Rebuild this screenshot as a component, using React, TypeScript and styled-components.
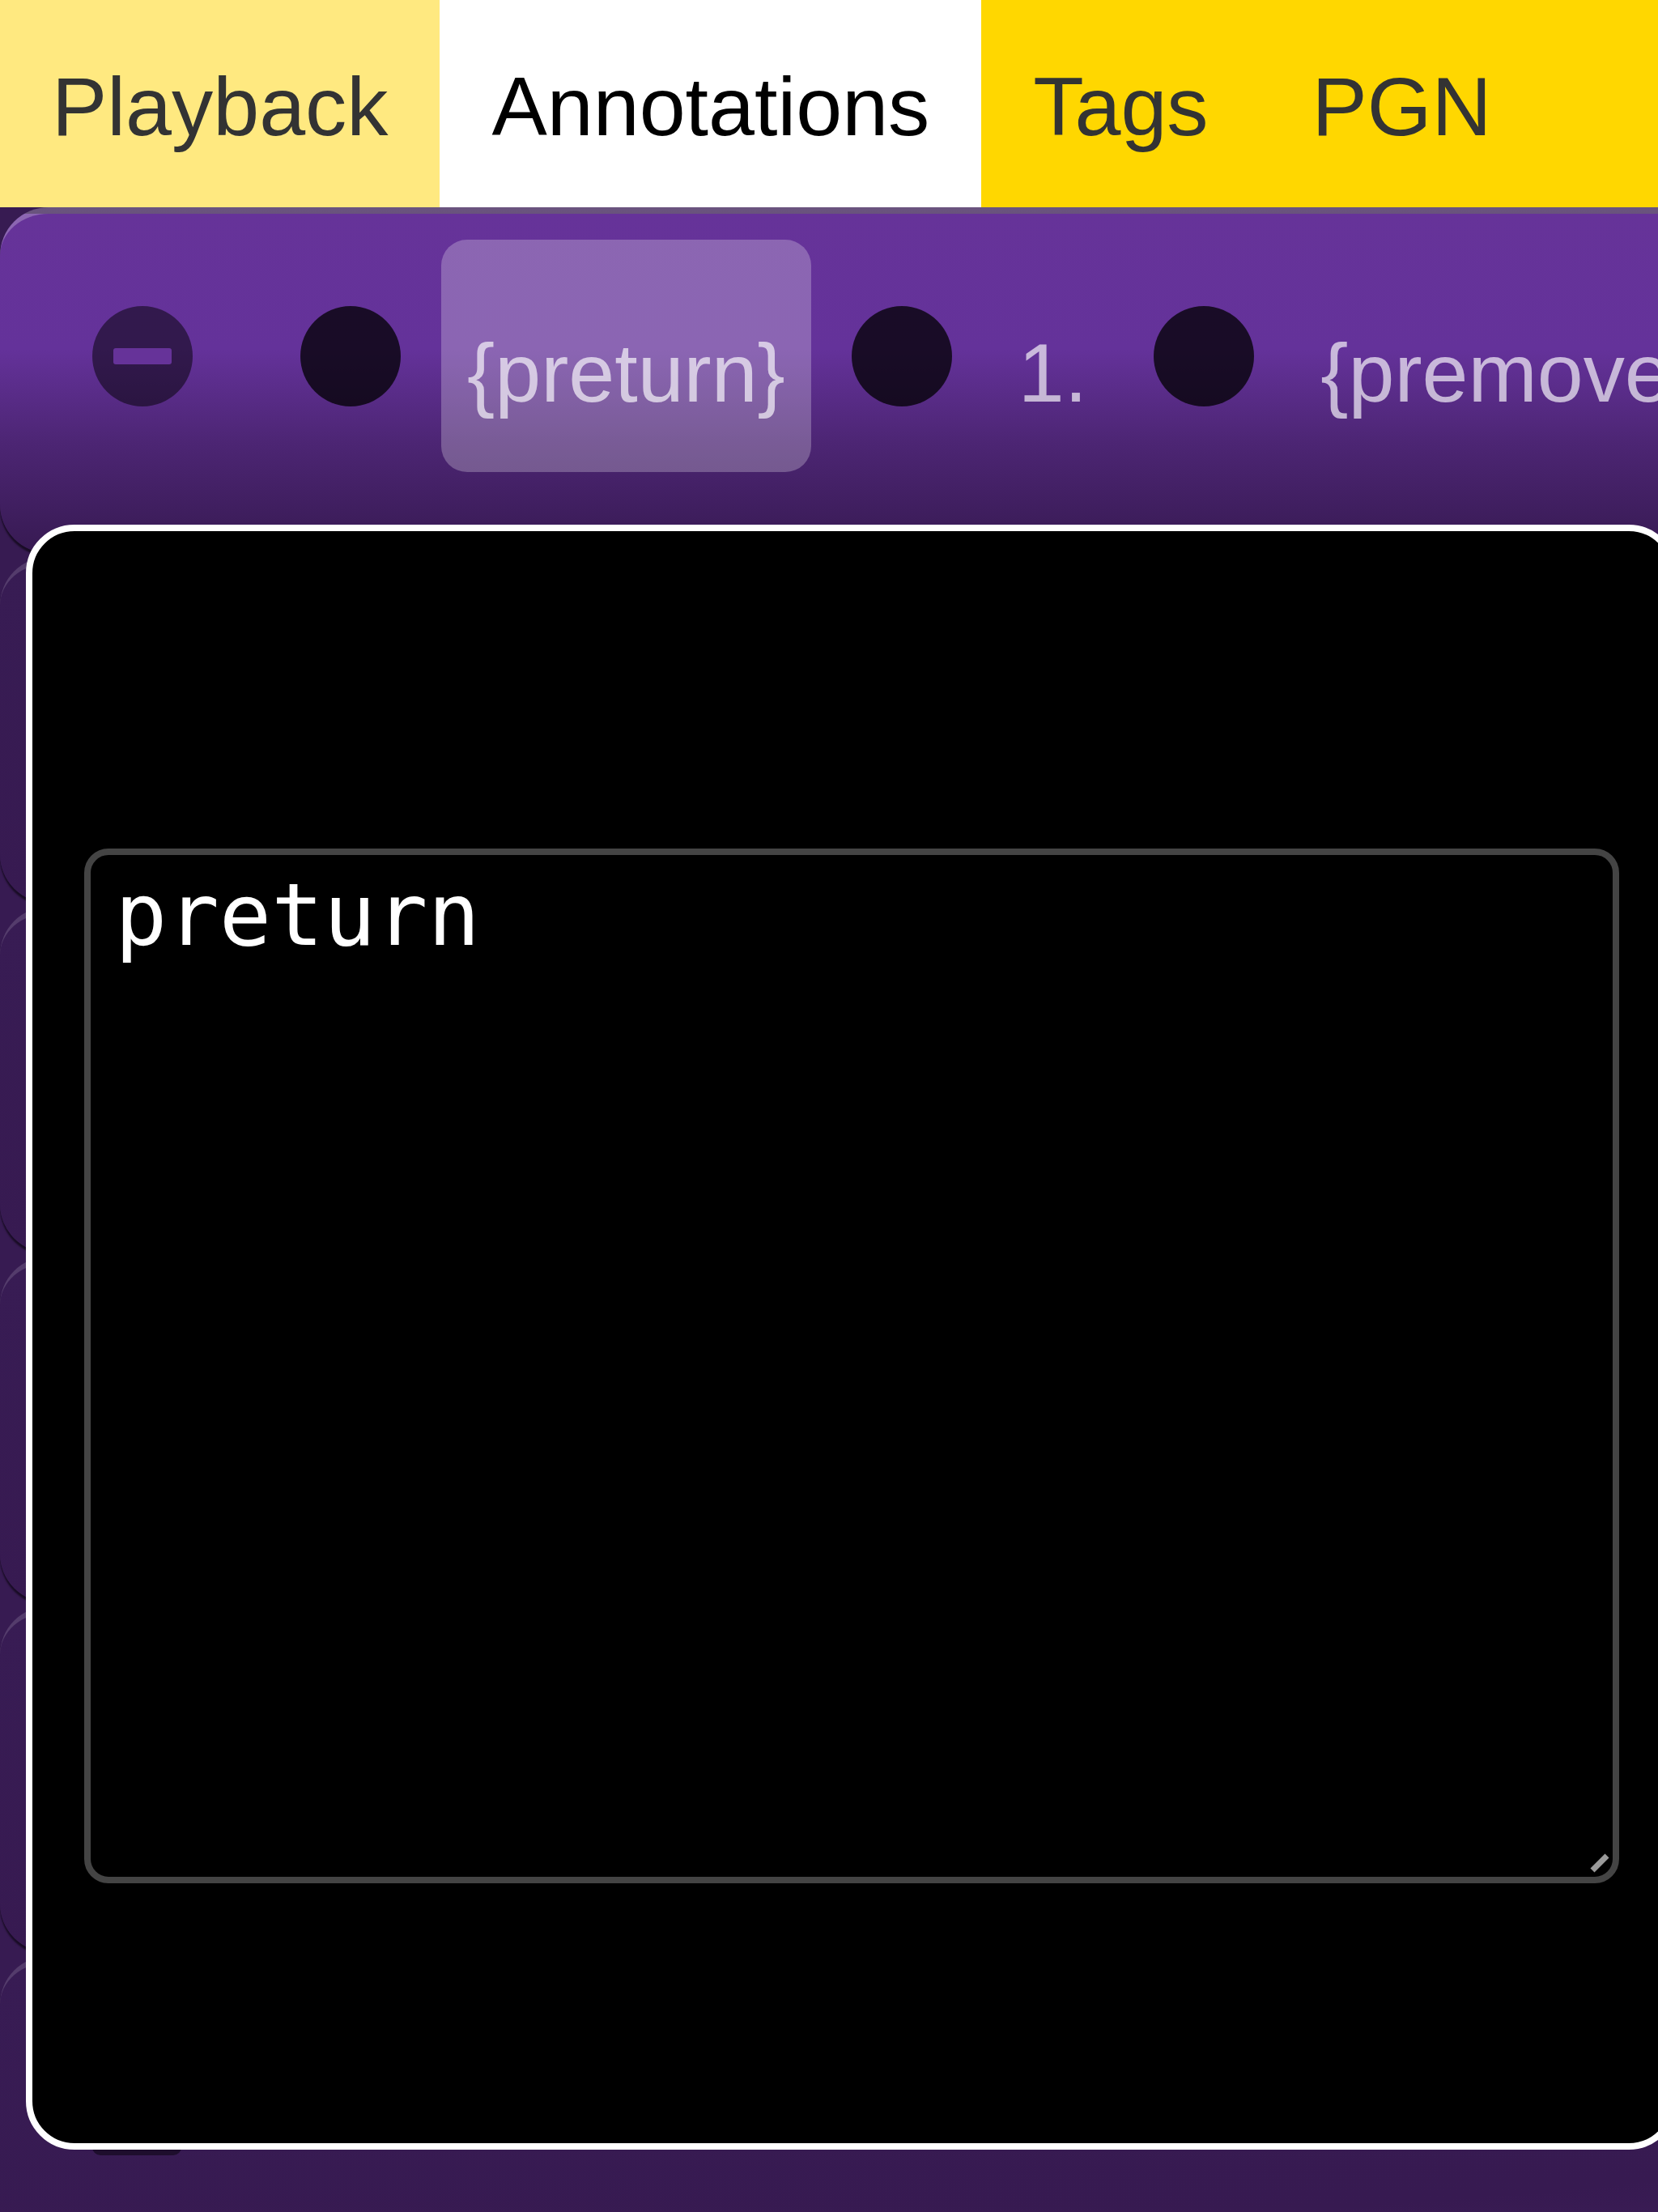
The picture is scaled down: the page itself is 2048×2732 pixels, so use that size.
import React from "react";
import styled, { createGlobalStyle } from "styled-components";

const GlobalStyle = createGlobalStyle`
  html, body {
    margin: 0;
    padding: 0;
    background: #371b52;
    overflow: hidden;
  }
  body {
    font-family: "Liberation Sans", Arial, sans-serif;
  }
  * { box-sizing: border-box; }
`;

const Page = styled.div`
  position: relative;
  width: 2048px;
  height: 2732px;
  overflow: hidden;
`;

const TabBar = styled.nav`
  display: flex;
  height: 256px;
  background: #ffd700;
`;

const Tab = styled.button<{ $state: "hover" | "active" | "idle" }>`
  display: flex;
  align-items: center;
  height: 100%;
  padding: 8px 64px 0;
  border: 0;
  margin: 0;
  font-family: "Liberation Sans", Arial, sans-serif;
  font-size: 102.4px;
  line-height: normal;
  cursor: pointer;
  color: ${(p) => (p.$state === "active" ? "#000" : "#333")};
  background: ${(p) =>
    p.$state === "active" ? "#ffffff" : p.$state === "hover" ? "#ffe980" : "transparent"};
`;

const List = styled.div`
  display: flex;
  flex-direction: column;
  gap: 5px;
`;

const Row = styled.div<{ $current?: boolean }>`
  display: flex;
  align-items: center;
  gap: 50px;
  height: 427px;
  flex: none;
  padding: 32px 0 100px 114px;
  border-top: 8px solid
    ${(p) => (p.$current ? "rgba(255, 255, 255, 0.25)" : "rgba(255, 255, 255, 0.14)")};
  border-radius: 60px 0 0 60px;
  background: ${(p) =>
    p.$current
      ? "linear-gradient(180deg, #663399 0%, #64329a 40%, #4c2573 68%, #371a52 100%)"
      : "linear-gradient(175deg, #381c54 0%, #371a51 75%, #3f1f5c 100%)"};
  box-shadow: 0 4px 2px rgba(0, 0, 0, 0.55);
  overflow: hidden;
  white-space: nowrap;
`;

const Dot = styled.span<{ $dim?: boolean }>`
  flex: none;
  width: 124px;
  height: 124px;
  border-radius: 50%;
  background: ${(p) => (p.$dim ? "rgba(0,0,0,0.5)" : "rgba(0,0,0,0.75)")};
  display: flex;
  align-items: center;
  justify-content: center;
`;

const CollapseDot = styled(Dot)`
  margin-right: 83px;
`;

const MinusBar = styled.span`
  width: 72px;
  height: 20px;
  border-radius: 3px;
  background: #663399;
`;

const Square = styled.span`
  flex: none;
  width: 110px;
  height: 124px;
  border-radius: 10px;
  background: rgba(0, 0, 0, 0.45);
  margin-right: 83px;
`;

const Chip = styled.span<{ $selected?: boolean }>`
  flex: none;
  padding: 106px 32px 63px;
  border-radius: 32px;
  font-family: "Liberation Sans", Arial, sans-serif;
  font-size: 102.4px;
  line-height: normal;
  color: rgba(255, 255, 255, 0.66);
  background: ${(p) => (p.$selected ? "rgba(255,255,255,0.25)" : "transparent")};
`;

const Modal = styled.div`
  position: absolute;
  left: 32px;
  top: 648px;
  width: 2040px;
  height: 2007px;
  border: 8px solid #ffffff;
  border-radius: 60px;
  background: #000;
  padding: 392px 64px 0;
`;

const EditorBox = styled.div`
  position: relative;
  width: 1896px;
  height: 1278px;
`;

const Editor = styled.textarea`
  display: block;
  width: 100%;
  height: 100%;
  margin: 0;
  border: 8px solid #444444;
  border-radius: 30px;
  background: #000;
  color: #fff;
  padding: 12px 30px;
  font-family: "DejaVu Sans Mono", "Liberation Mono", monospace;
  font-size: 107px;
  line-height: normal;
  resize: none;
  outline: none;
`;

const Grip = styled.svg`
  position: absolute;
  right: 12px;
  bottom: 13px;
  width: 24px;
  height: 24px;
`;

function MoveRow({ current }: { current?: boolean }) {
  return (
    <Row $current={current}>
      <CollapseDot $dim>
        <MinusBar />
      </CollapseDot>
      <Dot />
      <Chip $selected={current}>{"{preturn}"}</Chip>
      <Dot />
      <Chip>1.</Chip>
      <Dot />
      <Chip>{"{premove}"}</Chip>
      <Dot />
    </Row>
  );
}

export default function App() {
  return (
    <>
      <GlobalStyle />
      <Page>
        <TabBar>
          <Tab $state="hover">Playback</Tab>
          <Tab $state="active">Annotations</Tab>
          <Tab $state="idle">Tags</Tab>
          <Tab $state="idle">PGN</Tab>
        </TabBar>
        <List>
          <MoveRow current />
          <MoveRow />
          <MoveRow />
          <MoveRow />
          <MoveRow />
          <Row>
            <Square />
          </Row>
        </List>
        <Modal>
          <EditorBox>
            <Editor defaultValue="preturn" spellCheck={false} />
            <Grip viewBox="0 0 24 24">
              <line x1="3" y1="21" x2="21" y2="3" stroke="#9a9a9a" strokeWidth="7" />
            </Grip>
          </EditorBox>
        </Modal>
      </Page>
    </>
  );
}
